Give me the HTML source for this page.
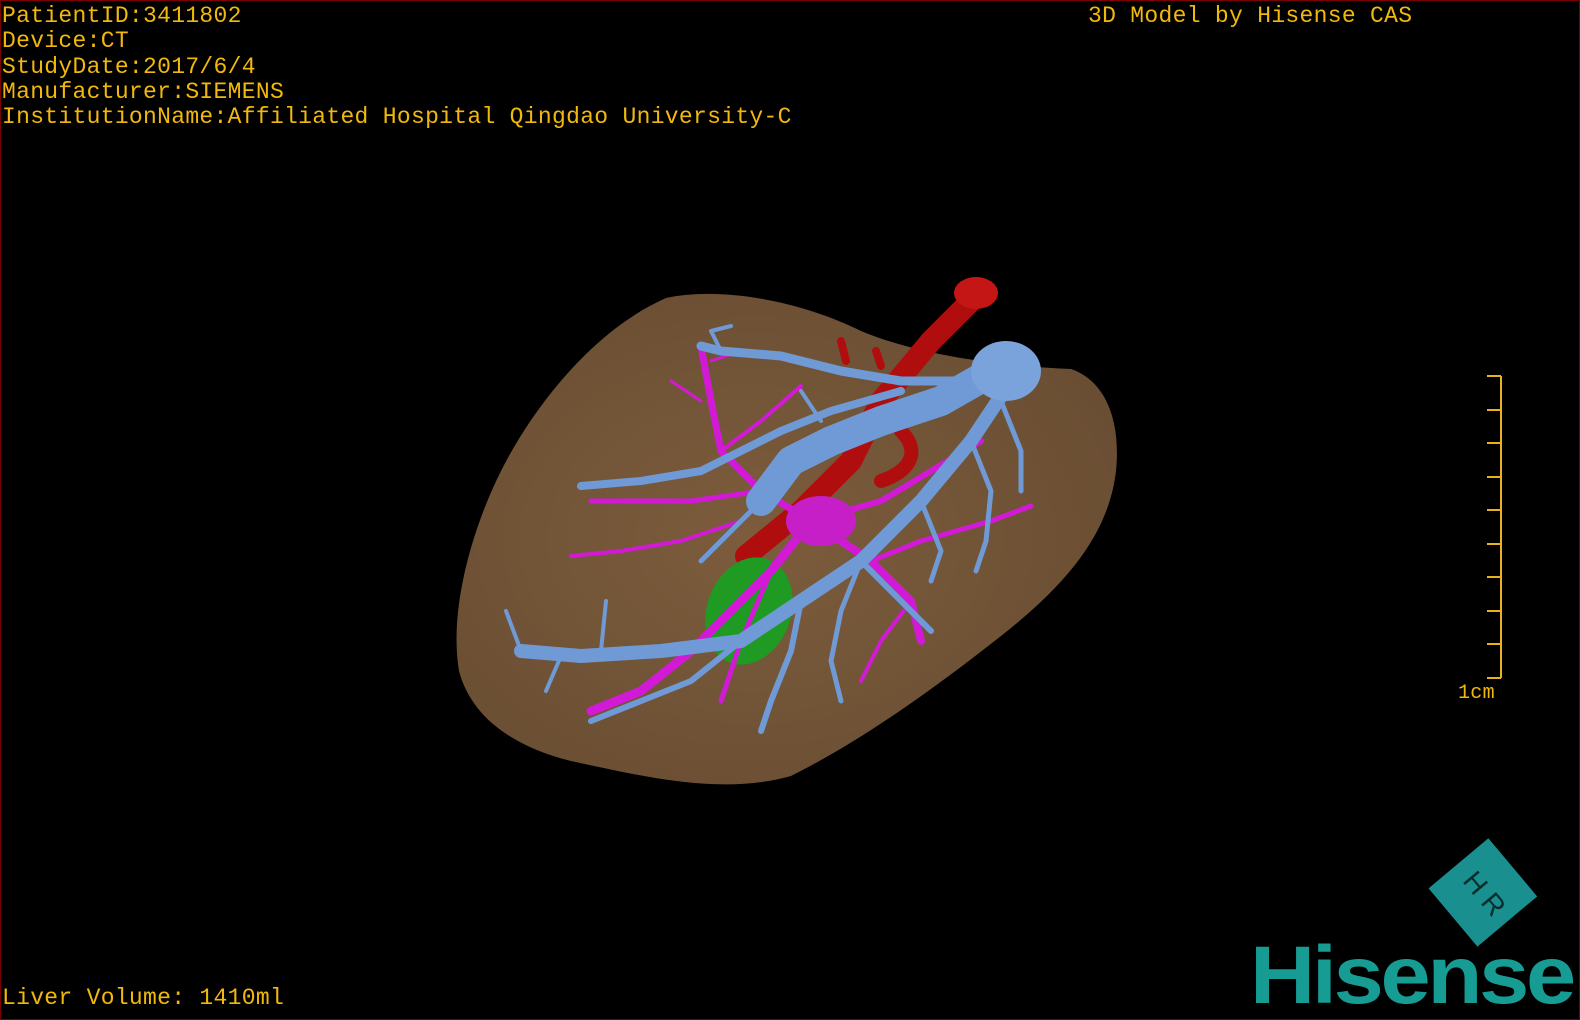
<!DOCTYPE html>
<html><head><meta charset="utf-8"><style>
html,body{margin:0;padding:0;background:#000;}
#c{position:relative;width:1580px;height:1020px;background:#000;overflow:hidden;box-sizing:border-box;border:1px solid #7a0000;}
.t{position:absolute;color:#f2b90c;font-family:"Liberation Mono",monospace;font-size:23px;line-height:25.3px;white-space:pre;letter-spacing:0.3px;}
svg{position:absolute;left:0;top:0;}
</style></head><body><div id="c">
<svg width="1580" height="1020" viewBox="0 0 1580 1020">
<defs><radialGradient id="lv" cx="0.45" cy="0.5" r="0.6"><stop offset="0" stop-color="#7c5c3c"/><stop offset="1" stop-color="#6a4e33"/></radialGradient></defs>
<path d="M665 297 C720 285 800 300 860 330 C920 355 1000 365 1070 368 C1105 380 1120 420 1115 470 C1108 530 1070 580 1000 635 C930 690 860 740 790 775 C720 795 640 775 570 760 C510 745 470 715 458 670 C448 610 470 530 500 470 C530 410 590 330 665 297 Z" fill="url(#lv)"/>
<g fill="none" stroke="#b00e0e" stroke-linecap="round">
<path d="M980 290 L930 340 L880 400 L850 460 L800 510 L745 555" stroke-width="22"/>
<path d="M900 430 C920 450 910 470 880 480" stroke-width="14"/>
<path d="M840 340 L845 360 M875 350 L880 365" stroke-width="8"/>
</g>
<ellipse cx="975" cy="292" rx="22" ry="16" fill="#c51616"/>
<ellipse cx="748" cy="610" rx="42" ry="55" fill="#1f9a22" transform="rotate(20 748 610)"/>
<g fill="none" stroke="#d21ad6" stroke-linecap="round" stroke-linejoin="round">
<path d="M810 520 L770 570 L730 610 L690 650 L640 690 L590 710" stroke-width="9"/>
<path d="M810 520 L760 490 L720 450 L710 400 L700 345" stroke-width="7"/>
<path d="M810 520 L870 560 L910 600 L920 640" stroke-width="8"/>
<path d="M810 520 L880 500 L930 470 L980 440" stroke-width="6"/>
<path d="M760 490 L690 500 L640 500 L590 500" stroke-width="5"/>
<path d="M740 520 L680 540 L620 550 L570 555" stroke-width="4"/>
<path d="M770 570 L740 640 L720 700" stroke-width="5"/>
<path d="M870 560 L920 540 L990 520 L1030 505" stroke-width="5"/>
<path d="M720 450 L760 420 L800 385" stroke-width="4"/>
<path d="M700 400 L670 380 M710 360 L740 350" stroke-width="3"/>
<path d="M910 600 L880 640 L860 680" stroke-width="4"/>
</g>
<ellipse cx="820" cy="520" rx="35" ry="25" fill="#c71fc8"/>
<g fill="none" stroke="#6f9ad6" stroke-linecap="round" stroke-linejoin="round">
<path d="M1010 360 L940 400 L880 420 L830 440 L790 460 L760 500" stroke-width="30"/>
<path d="M1010 380 L970 440 L920 500 L860 560 L800 600 L740 640 L660 650 L580 655 L520 650" stroke-width="14"/>
<path d="M960 380 L900 380 L840 370 L780 355 L720 350 L700 345" stroke-width="9"/>
<path d="M900 390 L830 410 L780 430 L740 450 L700 470 L640 480 L580 485" stroke-width="8"/>
<path d="M800 600 L790 650 L770 700 L760 730" stroke-width="6"/>
<path d="M860 560 L900 600 L930 630" stroke-width="6"/>
<path d="M740 640 L690 680 L640 700 L590 720" stroke-width="6"/>
<path d="M860 560 L840 610 L830 660 L840 700" stroke-width="5"/>
<path d="M1000 400 L1020 450 L1020 490" stroke-width="5"/>
<path d="M970 440 L990 490 L985 540 L975 570" stroke-width="5"/>
<path d="M920 500 L940 550 L930 580" stroke-width="5"/>
<path d="M780 480 L740 520 L700 560" stroke-width="5"/>
<path d="M520 650 L505 610 M560 655 L545 690 M600 650 L605 600" stroke-width="4"/>
<path d="M720 350 L710 330 L730 325 M800 390 L820 420" stroke-width="4"/>
</g>
<ellipse cx="1005" cy="370" rx="35" ry="30" fill="#7aa3dc"/>
<g stroke="#e8b21c" stroke-width="2" fill="none">
<path d="M1500 375 V677"/>
<path d="M1486 375 H1500 M1486 409 H1500 M1486 442 H1500 M1486 476 H1500 M1486 509 H1500 M1486 543 H1500 M1486 576 H1500 M1486 610 H1500 M1486 643 H1500 M1486 677 H1500"/>
</g>
<g transform="rotate(-40 1482 890)">
<rect x="1442" y="853" width="78" height="76" fill="#1a8f8f"/>
<text x="1482" y="903" font-family="Liberation Sans, sans-serif" font-size="28" fill="#0a2e2e" text-anchor="middle" transform="rotate(90 1482 893)">H R</text>
</g>
</svg>
<div class="t" style="left:1px;top:3px">PatientID:3411802
Device:CT
StudyDate:2017/6/4
Manufacturer:SIEMENS
InstitutionName:Affiliated Hospital Qingdao University-C</div>
<div class="t" style="left:1087px;top:3px">3D Model by Hisense CAS</div>
<div class="t" style="left:1457px;top:680px;font-size:20px">1cm</div>
<div class="t" style="left:1px;top:985px">Liver Volume: 1410ml</div>
<div style="position:absolute;left:1249px;top:933px;font-family:'Liberation Sans',sans-serif;font-weight:bold;font-size:82px;color:#179c93;letter-spacing:-3px;line-height:84px;transform:scaleX(1.1);transform-origin:left top;">Hisense</div>
</div></body></html>
